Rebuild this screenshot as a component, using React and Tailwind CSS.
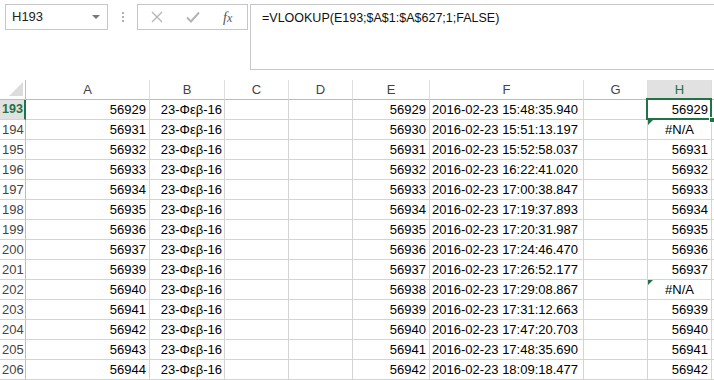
import React from "react";

const A = [56929, 56931, 56932, 56933, 56934, 56935, 56936, 56937, 56939, 56940, 56941, 56942, 56943, 56944];
const E = [56929, 56930, 56931, 56932, 56933, 56934, 56935, 56936, 56937, 56938, 56939, 56940, 56941, 56942];
const F = [
  "15:48:35.940", "15:51:13.197", "15:52:58.037", "16:22:41.020", "17:00:38.847", "17:19:37.893", "17:20:31.987",
  "17:24:46.470", "17:26:52.177", "17:29:08.867", "17:31:12.663", "17:47:20.703", "17:48:35.690", "18:09:18.477",
];
const H = ["56929", "#N/A", "56931", "56932", "56933", "56934", "56935", "56936", "56937", "#N/A", "56939", "56940", "56941", "56942"];

const cols = "grid grid-cols-[26px_124px_75px_64px_64px_77px_154px_64px_64px_1fr]";
const cell = "h-[20px] border-r border-b border-[#d4d4d4] flex items-center";

function Tri() {
  return (
    <div className="absolute top-0 left-0 w-0 h-0 border-t-[5px] border-t-[#217346] border-r-[5px] border-r-transparent" />
  );
}

export default function App() {
  return (
    <div className="w-[714px] h-[380px] overflow-hidden bg-white font-['Liberation_Sans',Arial,sans-serif] text-[13px] text-black">
      {/* formula bar area */}
      <div className="flex items-start pt-[4px] h-[80px]">
        <div className="ml-[5px] w-[103px] h-[26px] border border-[#c6c6c6] flex items-center pl-[6px] pr-[7px] text-[13px] text-[#222]">
          <span className="flex-1">H193</span>
          <div className="w-0 h-0 border-l-[4px] border-r-[4px] border-t-[4px] border-l-transparent border-r-transparent border-t-[#777]" />
        </div>
        <div className="w-[29px] h-[26px] flex flex-col items-center justify-center gap-[2px]">
          <div className="w-[2px] h-[2px] bg-[#b0b0b0]" />
          <div className="w-[2px] h-[2px] bg-[#b0b0b0]" />
          <div className="w-[2px] h-[2px] bg-[#b0b0b0]" />
        </div>
        <div className="w-[111px] h-[26px] border border-[#c6c6c6] flex items-center">
          <svg width="12" height="12" viewBox="0 0 12 12" className="ml-[13px]">
            <path d="M1 1L11 11M11 1L1 11" stroke="#b4b4b4" strokeWidth="1.3" />
          </svg>
          <svg width="14" height="12" viewBox="0 0 14 12" className="ml-[23px]">
            <path d="M1 6.5L5 10.5L13 1.5" stroke="#b4b4b4" strokeWidth="2" fill="none" />
          </svg>
          <span className="ml-[23px] font-['Liberation_Serif',serif] italic text-[14px] text-[#555]">
            f<span className="text-[12px]">x</span>
          </span>
        </div>
        <div className="ml-[2px] flex-1 h-[66px] border-l border-t border-b border-[#c6c6c6] pl-[11px] pt-[4px] text-[12.5px] text-[#111]">
          =VLOOKUP(E193;$A$1:$A$627;1;FALSE)
        </div>
      </div>

      {/* column headers */}
      <div className={cols}>
        <div className="relative h-[20px] border-r border-b border-[#bdbdbd]">
          <div className="absolute right-[2px] bottom-[3px] w-0 h-0 border-l-[14px] border-l-transparent border-b-[14px] border-b-[#dcdcdc]" />
        </div>
        {["A", "B", "C", "D", "E", "F", "G"].map((c) => (
          <div key={c} className="h-[20px] border-r border-r-[#dedede] border-b border-b-[#bdbdbd] flex items-center justify-center text-[#444]">
            {c}
          </div>
        ))}
        <div className="h-[20px] border-r border-r-[#dedede] border-b border-b-[#bdbdbd] bg-[#e1e1e1] flex items-center justify-center text-[#217346]">
          H
        </div>
        <div className="h-[20px] border-b border-b-[#bdbdbd]" />
      </div>

      {/* rows */}
      {A.map((a, i) => {
        const sel = i === 0;
        return (
          <div key={i} className={cols}>
            <div
              className={
                "h-[20px] border-b border-[#d4d4d4] flex items-center pl-[2px] " +
                (sel
                  ? "bg-[#e1e1e1] text-[#217346] font-bold text-[12.5px] border-r-2 border-r-[#217346]"
                  : "text-[#444] border-r border-r-[#bdbdbd]")
              }
            >
              {193 + i}
            </div>
            <div className={cell + " justify-end pr-[3px]"}>{a}</div>
            <div className={cell + " justify-end pr-[2px]"}>23-Φεβ-16</div>
            <div className={cell} />
            <div className={cell} />
            <div className={cell + " justify-end pr-[3px]"}>{E[i]}</div>
            <div className={cell + " pl-[2px]"}>2016-02-23 {F[i]}</div>
            <div className={cell} />
            <div className={cell + " relative " + (H[i] === "#N/A" ? "justify-center" : "justify-end pr-[3px]")}>
              {H[i] === "#N/A" && <Tri />}
              {H[i]}
              {sel && (
                <>
                  <div className="absolute -left-[2px] -top-[2px] -right-[1px] -bottom-[1px] border-2 border-[#217346]" />
                  <div className="absolute -right-[4px] -bottom-[4px] w-[6px] h-[6px] bg-[#217346] border border-white z-10" />
                </>
              )}
            </div>
            <div className="h-[20px] border-b border-[#d4d4d4]" />
          </div>
        );
      })}
    </div>
  );
}
